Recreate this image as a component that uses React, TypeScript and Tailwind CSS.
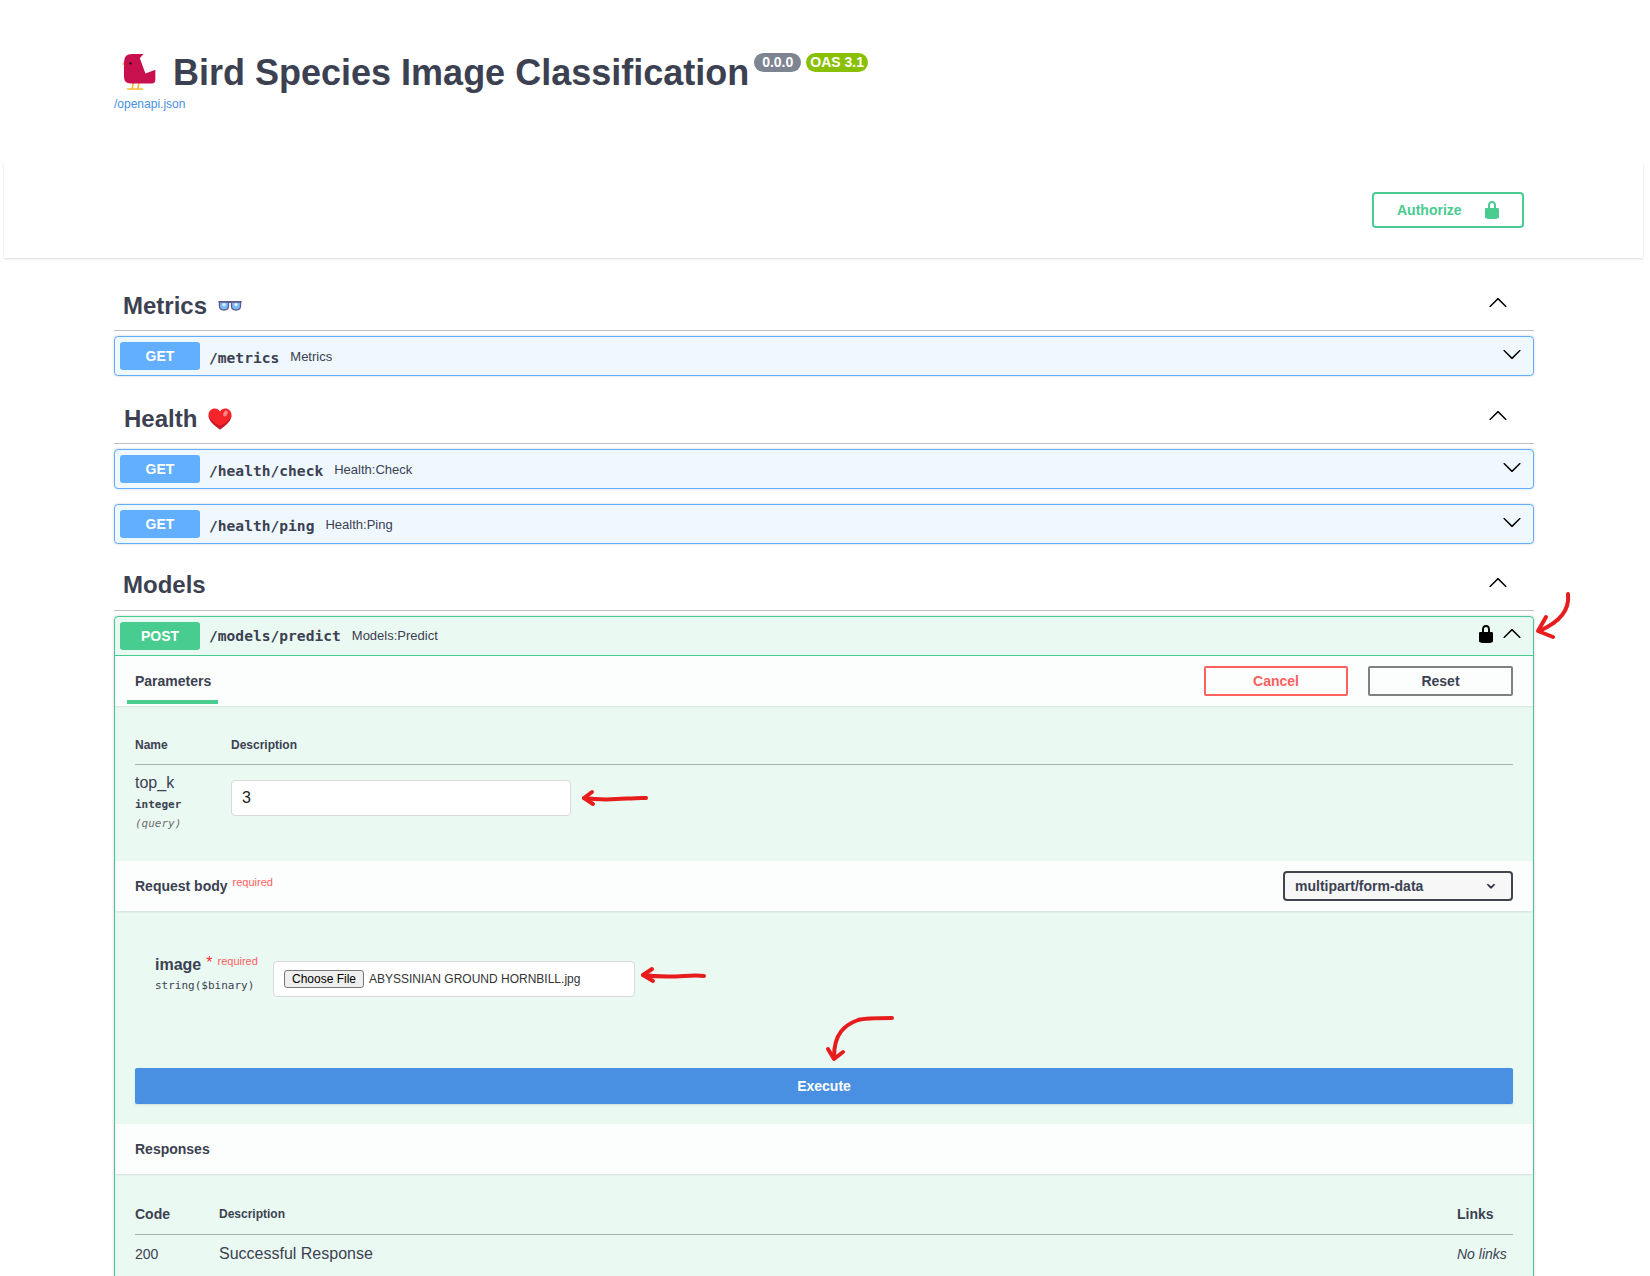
import React from "react";

const SANS = "font-['Liberation_Sans',Arial,sans-serif]";
const MONO = "font-['DejaVu_Sans_Mono',monospace]";

const LOCK = "M15.8 8H14V5.6C14 2.703 12.665 1 10 1 7.334 1 6 2.703 6 5.6V8H4c-.553 0-1 .646-1 1.199V17c0 .549.428 1.139.951 1.307l1.197.387C5.672 18.861 6.55 19 7.1 19h5.8c.549 0 1.428-.139 1.951-.307l1.196-.387c.524-.167.953-.757.953-1.306V9.199C17 8.646 16.352 8 15.8 8zM12 8H8V5.199C8 3.754 8.797 3 10 3c1.203 0 2 .754 2 2.199V8z";
const CHEV = "M17.418 6.109c.272-.268.709-.268.979 0s.271.701 0 .969l-7.908 7.83c-.27.268-.707.268-.979 0l-7.908-7.83c-.27-.268-.27-.701 0-.969.271-.268.709-.268.979 0L10 13.25l7.418-7.141z";

function Chevron({ up }: { up?: boolean }) {
  return (
    <svg viewBox="0 0 20 20" width="20" height="20" className={up ? "rotate-180 shrink-0" : "shrink-0"} fill="#000">
      <path d={CHEV} />
    </svg>
  );
}

function Lock({ color }: { color: string }) {
  return (
    <svg viewBox="0 0 20 20" width="20" height="20" fill={color} className="shrink-0">
      <path d={LOCK} />
    </svg>
  );
}

function Bird() {
  return (
    <svg viewBox="30 36 112 118" width="37" height="39" className="shrink-0">
      <path d="M70 130 L67 147 M87 130 L84 147 M53 148 H98" stroke="#f9b934" strokeWidth="5" strokeLinecap="round" fill="none" />
      <path d="M36 72 L48 64 L48 79 Z" fill="#f9b934" />
      <path d="M66 42 H101 L90 55 L107 101 L137 90 V120 Q137 131 126 131 H62 Q42 131 42 110 V66 Q42 42 66 42 Z" fill="#c8104e" />
      <circle cx="62" cy="70" r="4" fill="#3a1020" />
    </svg>
  );
}

function Glasses() {
  return (
    <svg viewBox="0 0 24 11" width="24" height="11" className="shrink-0">
      <path d="M0.5 1 H23.5 V3 H0.5 Z" fill="#5f5a8a" />
      <path d="M1.5 2 H10.5 V6 Q10.5 10 6 10 Q1.5 10 1.5 6 Z" fill="#7cbcf5" stroke="#5f5a8a" strokeWidth="1.3" />
      <path d="M13.5 2 H22.5 V6 Q22.5 10 18 10 Q13.5 10 13.5 6 Z" fill="#7cbcf5" stroke="#5f5a8a" strokeWidth="1.3" />
      <circle cx="6" cy="4.6" r="1.6" fill="#dff0ff" />
      <circle cx="18" cy="4.6" r="1.6" fill="#dff0ff" />
    </svg>
  );
}

function Heart() {
  return (
    <svg viewBox="0 0 24 22" width="24" height="22" className="shrink-0 translate-y-[1px]">
      <path d="M12 21.5 C6 17 0.5 12.8 0.5 7 C0.5 3 3.5 0.5 6.8 0.5 C9 0.5 11 1.6 12 3.6 C13 1.6 15 0.5 17.2 0.5 C20.5 0.5 23.5 3 23.5 7 C23.5 12.8 18 17 12 21.5 Z" fill="#f5252a" />
      <path d="M12 21.5 C6 17 0.5 12.8 0.5 7 C2 12 7 15.5 12 18 C17 15.5 22 12 23.5 7 C23.5 12.8 18 17 12 21.5 Z" fill="#c9182a" />
      <ellipse cx="17.5" cy="5.5" rx="2" ry="3" transform="rotate(25 17.5 5.5)" fill="#f98a8a" />
    </svg>
  );
}

function SectionHead({ title, icon, className, titleClass }: { title: string; icon?: React.ReactNode; className: string; titleClass: string }) {
  return (
    <div className={`flex h-[51px] items-center justify-between border-b border-[#bdc0c6] pr-[26px] ${className}`}>
      <div className="flex items-center gap-[11px] text-[24px] font-bold leading-[30px] text-[#3b4151]">
        <span className={titleClass}>{title}</span>
        {icon}
      </div>
      <div className="-translate-y-[2px]">
        <Chevron up />
      </div>
    </div>
  );
}

function GetRow({ path, summary, className }: { path: string; summary: string; className: string }) {
  return (
    <div className={`flex h-[40px] items-center rounded-[4px] border border-[#61affe] bg-[#eff7ff] pl-[5px] pr-[11px] shadow-[0_0_3px_rgba(0,0,0,0.19)] ${className}`}>
      <div className="flex h-[28px] w-[80px] items-center justify-center rounded-[3px] bg-[#61affe] text-[14px] font-bold text-white">GET</div>
      <div className={`${MONO} ml-[9px] pt-[3px] text-[14.6px] font-bold text-[#3b4151]`}>{path}</div>
      <div className="ml-[11px] flex-1 pt-[2px] text-[13px] text-[#3b4151]">{summary}</div>
      <div className="-translate-y-[2px]">
        <Chevron />
      </div>
    </div>
  );
}

function Arrows() {
  return (
    <svg viewBox="0 0 1650 1276" width="1650" height="1276" className="pointer-events-none absolute left-0 top-0" fill="none" stroke="#e71d1d" strokeWidth="4" strokeLinecap="round" strokeLinejoin="round">
      <path d="M1568 594 C1570 612 1558 623 1539 631" />
      <path d="M1546 617 L1538 631 L1553 637" />
      <path d="M646 798 C630 797 612 802 584 798" />
      <path d="M592 792 L584 798 L593 804" />
      <path d="M704 976 C690 974 672 979 643 975" />
      <path d="M652 969 L643 975 L653 981" />
      <path d="M892 1018 C875 1018 865 1018 858 1020 C845 1025 834 1033 834 1057" />
      <path d="M828 1049 L834 1059 L843 1052" />
    </svg>
  );
}

export default function App() {
  return (
    <div className={`${SANS} relative h-[1276px] w-[1650px] overflow-hidden bg-white text-[#3b4151]`}>
      <header className="h-[162px] pl-[114px] pt-[50px]">
        <div className="flex items-start">
          <div className="ml-[6px] mt-[2px]">
            <Bird />
          </div>
          <h1 className="ml-[16px] mt-[1px] text-[36px] font-bold leading-[44px] text-[#3b4151]">Bird Species Image Classification</h1>
          <span className="ml-[5px] mt-[3px] flex h-[19px] w-[47px] items-center justify-center rounded-[10px] bg-[#7d8492] text-[14px] font-bold text-white">0.0.0</span>
          <span className="ml-[5px] mt-[3px] flex h-[19px] w-[62px] items-center justify-center rounded-[10px] bg-[#89bf04] text-[14px] font-bold text-white">OAS 3.1</span>
        </div>
        <a className="mt-[1px] block text-[12px] leading-[16px] text-[#4990e2]">/openapi.json</a>
      </header>

      <div className="ml-[4px] mr-[7px] flex h-[96px] items-center justify-end bg-white pr-[119px] shadow-[0_1px_2px_rgba(0,0,0,0.15)]">
        <button className="flex h-[36px] w-[152px] items-center rounded-[4px] border-2 border-[#49cc90] pl-[23px] text-[14px] font-bold text-[#49cc90]">
          <span>Authorize</span>
          <span className="ml-[20px]">
            <Lock color="#49cc90" />
          </span>
        </button>
      </div>

      <main className="mx-[114px] w-[1420px]">
        <SectionHead className="mt-[22px]" titleClass="pl-[9px] pt-[2px]" title="Metrics" icon={<Glasses />} />
        <GetRow className="mt-[5px]" path="/metrics" summary="Metrics" />

        <SectionHead className="mt-[17px]" titleClass="pl-[10px] pt-[2px]" title="Health" icon={<Heart />} />
        <GetRow className="mt-[5px]" path="/health/check" summary="Health:Check" />
        <GetRow className="mt-[15px]" path="/health/ping" summary="Health:Ping" />

        <SectionHead className="mt-[16px]" titleClass="pl-[9px]" title="Models" />

        <section className="mt-[5px] rounded-t-[4px] border border-[#49cc90] bg-[#ebf9f3] shadow-[0_0_3px_rgba(0,0,0,0.19)]">
          <div className="flex h-[39px] items-center border-b border-[#49cc90] pl-[5px] pr-[11px]">
            <div className="flex h-[28px] w-[80px] items-center justify-center rounded-[3px] bg-[#49cc90] text-[14px] font-bold text-white">POST</div>
            <div className={`${MONO} ml-[9px] text-[14.6px] font-bold`}>/models/predict</div>
            <div className="ml-[11px] flex-1 text-[13px]">Models:Predict</div>
            <div className="-translate-y-[2px]">
              <Lock color="#000" />
            </div>
            <div className="ml-[6px] -translate-y-[2px]">
              <Chevron up />
            </div>
          </div>

          <div className="flex h-[50px] items-start justify-between bg-[#fcfefd] pr-[20px] shadow-[0_1px_2px_rgba(0,0,0,0.1)]">
            <div className="ml-[12px] h-[48px] w-[91px] border-b-4 border-[#49cc90] pl-[8px] text-[14px] font-bold leading-[50px]">Parameters</div>
            <div className="mt-[10px] flex gap-[20px]">
              <button className="h-[30px] w-[144px] rounded-[2px] border-2 border-[#ff6060] text-[14px] font-bold text-[#ff6060]">Cancel</button>
              <button className="h-[30px] w-[145px] rounded-[2px] border-2 border-[#808080] text-[14px] font-bold text-[#3b4151]">Reset</button>
            </div>
          </div>

          <div className="h-[155px] px-[20px] pt-[19px]">
            <div className="flex h-[40px] items-center border-b border-[#a9b0b0] text-[12px] font-bold">
              <div className="w-[96px]">Name</div>
              <div>Description</div>
            </div>
            <div className="flex">
              <div className="w-[96px] pt-[8px]">
                <div className="text-[16px] leading-[20px]">top_k</div>
                <div className={`${MONO} mt-[4px] text-[11px] font-bold leading-[16px]`}>integer</div>
                <div className={`${MONO} mt-[3px] text-[11px] italic leading-[16px] text-[#6b6b6b]`}>(query)</div>
              </div>
              <div className="mt-[15px] flex h-[36px] w-[340px] items-center rounded-[4px] border border-[#d9d9d9] bg-white pl-[10px] text-[16px] text-[#222]">3</div>
            </div>
          </div>

          <div className="flex h-[50px] items-center justify-between bg-[#fcfefd] px-[20px] shadow-[0_1px_2px_rgba(0,0,0,0.1)]">
            <div className="flex items-start">
              <span className="text-[14px] font-bold leading-[18px]">Request body</span>
              <span className="ml-[5px] -mt-[2px] text-[11px] leading-[14px] text-[#ff6060]">required</span>
            </div>
            <div className="flex h-[30px] w-[230px] items-center justify-between rounded-[4px] border-2 border-[#41444e] bg-[#f7f7f7] pl-[10px] pr-[12px] text-[14px] font-bold">
              <span>multipart/form-data</span>
              <svg viewBox="0 0 20 20" width="16" height="16" fill="#1f2430">
                <path d="M13.418 7.859a.695.695 0 0 1 .978 0 .68.68 0 0 1 0 .969l-3.908 3.83a.697.697 0 0 1-.979 0l-3.908-3.83a.68.68 0 0 1 0-.969.695.695 0 0 1 .978 0L10 11l3.418-3.141z" stroke="#1f2430" strokeWidth="0.8" />
              </svg>
            </div>
          </div>

          <div className="px-[20px] pb-[20px] pt-[43px]">
            <div className="flex pl-[20px]">
              <div className="w-[118px]">
                <div className="flex items-start leading-[20px]">
                  <span className="pt-[1px] text-[16px] font-bold">image</span>
                  <span className="ml-[5px] pt-[1px] text-[16px] leading-[16px] text-[#ff3030]">*</span>
                  <span className="ml-[5px] text-[11px] leading-[14px] text-[#ff6060]">required</span>
                </div>
                <div className={`${MONO} mt-[3px] text-[11px] leading-[16px]`}>string($binary)</div>
              </div>
              <div className="mt-[7px] flex h-[36px] w-[362px] items-center rounded-[4px] border border-[#d9d9d9] bg-white pl-[10px] text-[12px] text-[#333]">
                <button className="flex h-[18px] w-[80px] items-center justify-center rounded-[3px] border border-[#767676] bg-[#efefef] text-[12px] text-black">Choose File</button>
                <span className="ml-[5px]">ABYSSINIAN GROUND HORNBILL.jpg</span>
              </div>
            </div>
            <button className="mt-[71px] block h-[36px] w-full rounded-[2px] bg-[#4990e2] text-[14px] font-bold text-white shadow-[0_1px_2px_rgba(0,0,0,0.1)]">Execute</button>
          </div>

          <div className="flex h-[50px] items-center bg-[#fcfefd] px-[20px] text-[14px] font-bold shadow-[0_1px_2px_rgba(0,0,0,0.1)]">Responses</div>

          <div className="h-[160px] px-[20px] pt-[20px]">
            <div className="flex h-[41px] items-center border-b border-[#a9b0b0]">
              <div className="w-[84px] text-[14px] font-bold">Code</div>
              <div className="flex-1 text-[12px] font-bold">Description</div>
              <div className="w-[56px] text-[14px] font-bold">Links</div>
            </div>
            <div className="flex h-[38px] items-center">
              <div className="w-[84px] text-[14px]">200</div>
              <div className="flex-1 text-[16px]">Successful Response</div>
              <div className="w-[56px] text-[14px] italic">No links</div>
            </div>
          </div>
        </section>
      </main>

      <Arrows />
    </div>
  );
}
